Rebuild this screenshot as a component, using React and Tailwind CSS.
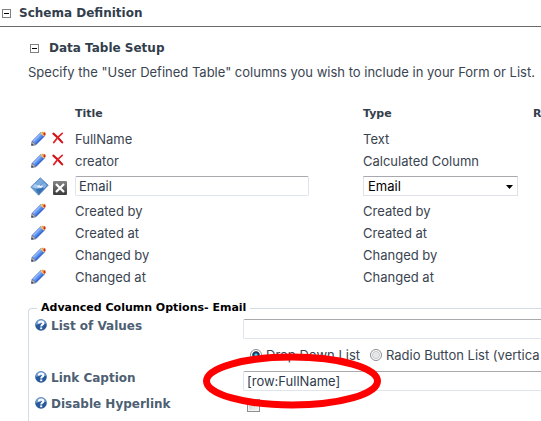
import React, { useState } from "react";

const columns = [
  { title: "FullName", type: "Text", removable: true },
  { title: "creator", type: "Calculated Column", removable: true },
  { title: "Email", type: "Email", editing: true },
  { title: "Created by", type: "Created by" },
  { title: "Created at", type: "Created at" },
  { title: "Changed by", type: "Changed by" },
  { title: "Changed at", type: "Changed at" },
];

const headingFont = "font-['DejaVu_Sans',sans-serif] font-bold";

const inputClass =
  "block h-5 border border-[#dfe5ee] border-t-[#a9a9ad] bg-white px-[3px] text-[13px] leading-4 text-[#2f3b4d] outline-none";

function ToggleButton({ open, onClick, label }) {
  return (
    <button
      type="button"
      aria-label={label}
      onClick={onClick}
      className="flex h-[9px] w-[9px] shrink-0 items-center justify-center border border-[#808080] bg-white"
    >
      <span className={open ? "h-px w-[5px] bg-black" : "h-[5px] w-[5px] bg-black"} />
    </button>
  );
}

function PencilIcon() {
  return (
    <svg width="15" height="15" viewBox="0 0 15 15" className="block">
      <path d="M0.6 14.2 L1.2 10.2 L9.8 1.6 L13.4 5.2 L4.8 13.8 Z" fill="#5a8ff0" stroke="#3a5fb4" strokeWidth="0.7" />
      <path d="M2.4 10.4 L10.4 2.4" stroke="#8fb6fb" strokeWidth="1.6" />
      <path d="M4.6 13 L12.8 4.8" stroke="#3565cf" strokeWidth="1.2" />
      <path d="M0.6 14.2 L1.4 10.4 L4.6 13.6 Z" fill="#b9b7b6" stroke="#77777c" strokeWidth="0.6" />
      <path d="M0.3 14.6 L0.9 12.4 L2.6 14.2 Z" fill="#3a3a3a" />
      <path d="M9.4 2.2 L11.2 0.5 L14.5 3.8 L12.8 5.6 Z" fill="#f3c868" />
      <path d="M12.6 1.2 L14.4 1.4 L14.6 4 L13.6 4.8 L12.4 3.4 Z" fill="#cf2318" />
      <path d="M10.4 1.4 L12 0.4 L13 1.5 L11.8 2.8 Z" fill="#efa23e" />
    </svg>
  );
}

function DeleteIcon() {
  return (
    <svg width="12" height="12" viewBox="0 0 12 12" className="block">
      <path d="M1.4 1.6 Q5.4 4.8 10.2 10.4" fill="none" stroke="#cf1018" strokeWidth="2" strokeLinecap="round" />
      <path d="M10.2 1.4 Q5.4 5 1.8 10.6" fill="none" stroke="#e0242b" strokeWidth="1.8" strokeLinecap="round" />
    </svg>
  );
}

function SaveIcon() {
  return (
    <svg width="19" height="19" viewBox="0 0 20 20" className="block">
      <defs>
        <linearGradient id="disk" x1="0" y1="0" x2="1" y2="1">
          <stop offset="0" stopColor="#8db8e6" />
          <stop offset="0.5" stopColor="#5c92cc" />
          <stop offset="1" stopColor="#2b5d9c" />
        </linearGradient>
      </defs>
      <path d="M10.8 0.8 L19.2 8.6 L9.2 19.2 L0.8 10.6 Z" fill="url(#disk)" stroke="#4f84c0" strokeWidth="0.8" strokeLinejoin="round" />
      <path d="M10.6 2 L14.6 5.6 L9.8 9 L5.6 6.8 Z" fill="#7aabdf" />
      <path d="M5.4 7 L9 9 L6.6 12.2 L2.2 10.4 Z" fill="#a9cbf0" />
      <path d="M11.4 8.6 L14.8 6 L17.8 8.8 L14.8 12 Z" fill="#86b2e2" />
      <path d="M7.6 9.8 L9.6 8.2 L11 9.4 L12.6 8.6 L13.8 10.2 L11 11.8 L9.4 11 L8 12.2 Z" fill="#e6f1fc" />
      <path d="M6.4 13 L10 12.6 L13.8 11.4 L14 13 L9.2 17.6 Z" fill="#3670b4" />
    </svg>
  );
}

function CancelIcon() {
  return (
    <svg width="14" height="14" viewBox="0 0 14 14" className="block">
      <defs>
        <linearGradient id="cancel" x1="0" y1="0" x2="0" y2="1">
          <stop offset="0" stopColor="#858585" />
          <stop offset="1" stopColor="#3b3b3b" />
        </linearGradient>
      </defs>
      <rect width="14" height="14" rx="1" fill="url(#cancel)" />
      <path d="M3 3 L11 11 M11 3 L3 11" stroke="#fff" strokeWidth="2.2" />
    </svg>
  );
}

function HelpIcon() {
  return (
    <svg width="12" height="12" viewBox="0 0 12 12" className="shrink-0">
      <circle cx="6" cy="6" r="5.8" fill="#27599b" />
      <path d="M0.8 6 A5.2 5.2 0 0 1 11.2 5 Q6 3.6 0.8 6" fill="#6f9bcd" />
      <path d="M3.7 4.5 Q3.8 2.4 6.1 2.4 Q8.4 2.5 8.4 4.3 Q8.4 5.3 7.1 5.9 Q6.3 6.3 6.2 7.5" fill="none" stroke="#fff" strokeWidth="2" />
      <rect x="5.2" y="8.4" width="2" height="1.8" fill="#fff" />
    </svg>
  );
}

function OptionRow({ label, htmlFor, children }) {
  return (
    <div className="flex h-[26px]">
      <div className="flex w-[208px] shrink-0 gap-1">
        {label && (
          <>
            <HelpIcon />
            <label htmlFor={htmlFor} className={`${headingFont} text-[12px] leading-[14px] text-[#4e5f73]`}>
              {label}
            </label>
          </>
        )}
      </div>
      {children}
    </div>
  );
}

function RadioOption({ value, current, onChange }) {
  return (
    <label className="flex items-center gap-1 whitespace-nowrap">
      <input
        type="radio"
        name="listType"
        checked={current === value}
        onChange={() => onChange(value)}
        className="h-3 w-3 shrink-0 appearance-none rounded-full border border-[#8a8d91] bg-[radial-gradient(#e8e8e8_0_35%,#c9ccd0_50%,#fff_62%)] checked:bg-[radial-gradient(#5cc4f0_0_10%,#12507c_30%,#122c44_46%,#fff_60%)]"
      />
      {value}
    </label>
  );
}

export default function App() {
  const [schemaOpen, setSchemaOpen] = useState(true);
  const [setupOpen, setSetupOpen] = useState(true);
  const [title, setTitle] = useState("Email");
  const [type, setType] = useState("Email");
  const [listOfValues, setListOfValues] = useState("");
  const [listType, setListType] = useState("Drop Down List");
  const [caption, setCaption] = useState("[row:FullName]");
  const [disabled, setDisabled] = useState(false);

  return (
    <div className="w-full overflow-hidden bg-white font-['Inter',sans-serif] text-[13px] leading-4 text-[#3a4450]">
      {/* Section header */}
      <div className="flex h-[27px] items-center gap-2 border-b border-[#6b6b6b] pl-0.5">
        <ToggleButton open={schemaOpen} onClick={() => setSchemaOpen(!schemaOpen)} label="Toggle Schema Definition" />
        <h1 className={`${headingFont} text-[12px] text-[#333e4c]`}>Schema Definition</h1>
      </div>

      {schemaOpen && (
        <div className="pt-[13px] pl-7">
          <div className="flex items-center gap-2.5 pl-0.5">
            <ToggleButton open={setupOpen} onClick={() => setSetupOpen(!setupOpen)} label="Toggle Data Table Setup" />
            <h2 className={`${headingFont} text-[12px] text-[#333e4c]`}>Data Table Setup</h2>
          </div>

          {setupOpen && (
            <>
              <p className="mt-2 whitespace-nowrap">
                Specify the "User Defined Table" columns you wish to include in your Form or List.
              </p>

              {/* Columns */}
              <table className="mt-5 w-full table-fixed border-collapse text-left">
                <colgroup>
                  <col className="w-[47px]" />
                  <col className="w-[288px]" />
                  <col className="w-[170px]" />
                  <col />
                </colgroup>
                <thead>
                  <tr className={`${headingFont} h-7 text-[11px] text-[#333e4c]`}>
                    <th></th>
                    <th>Title</th>
                    <th>Type</th>
                    <th>R</th>
                  </tr>
                </thead>
                <tbody>
                  {columns.map((col) =>
                    col.editing ? (
                      <tr key={col.title} className="h-7">
                        <td>
                          <div className="flex items-center gap-1 pl-0.5">
                            <button type="button" aria-label="Save"><SaveIcon /></button>
                            <button type="button" aria-label="Cancel" className="pt-1"><CancelIcon /></button>
                          </div>
                        </td>
                        <td>
                          <input
                            type="text"
                            aria-label="Title"
                            value={title}
                            onChange={(e) => setTitle(e.target.value)}
                            className={`${inputClass} w-[234px] rounded-xs`}
                          />
                        </td>
                        <td>
                          <div className="relative w-[155px]">
                            <select
                              aria-label="Type"
                              value={type}
                              onChange={(e) => setType(e.target.value)}
                              className="block h-5 w-full appearance-none border border-[#dfe0e8] border-t-[#a9a9ad] bg-white pl-1 text-[13px] leading-4 text-black outline-none"
                            >
                              <option>Email</option>
                              <option>Text</option>
                            </select>
                            <svg width="7" height="4" viewBox="0 0 7 4" className="pointer-events-none absolute top-[9px] right-[5px]">
                              <path d="M0 0 H7 L3.5 4 Z" fill="#000" />
                            </svg>
                          </div>
                        </td>
                        <td></td>
                      </tr>
                    ) : (
                      <tr key={col.title} className="h-[22px]">
                        <td>
                          <div className="flex items-center gap-1.5 pb-0.5 pl-[3px]">
                            <button type="button" aria-label={`Edit ${col.title}`}><PencilIcon /></button>
                            {col.removable && (
                              <button type="button" aria-label={`Delete ${col.title}`}><DeleteIcon /></button>
                            )}
                          </div>
                        </td>
                        <td>{col.title}</td>
                        <td>{col.type}</td>
                        <td></td>
                      </tr>
                    )
                  )}
                </tbody>
              </table>

              {/* Advanced options */}
              <fieldset className="mt-3 h-[130px] rounded-tl-sm border border-r-0 border-b-0 border-[#d3dce6] pl-1.5">
                <legend className={`${headingFont} ml-0.5 px-1 text-[11px] leading-4 text-black`}>
                  Advanced Column Options- Email
                </legend>
                <div className="relative pt-[3px]">
                  <OptionRow label="List of Values" htmlFor="listOfValues">
                    <input
                      id="listOfValues"
                      type="text"
                      value={listOfValues}
                      onChange={(e) => setListOfValues(e.target.value)}
                      className={`${inputClass} min-w-0 flex-1 rounded-l-xs border-r-0`}
                    />
                  </OptionRow>
                  <OptionRow>
                    <div className="flex h-5 items-center gap-2.5 pl-[7px]">
                      <RadioOption value="Drop Down List" current={listType} onChange={setListType} />
                      <RadioOption value="Radio Button List (vertica" current={listType} onChange={setListType} />
                    </div>
                  </OptionRow>
                  <OptionRow label="Link Caption" htmlFor="caption">
                    <input
                      id="caption"
                      type="text"
                      value={caption}
                      onChange={(e) => setCaption(e.target.value)}
                      className={`${inputClass} min-w-0 flex-1 rounded-l-xs border-r-0`}
                    />
                  </OptionRow>
                  <OptionRow label="Disable Hyperlink" htmlFor="disableLink">
                    <input
                      id="disableLink"
                      type="checkbox"
                      checked={disabled}
                      onChange={(e) => setDisabled(e.target.checked)}
                      className="mt-0.5 ml-1 h-[13px] w-[13px] appearance-none border border-[#8e8f8f] bg-linear-to-br from-[#c9ccd0] to-[#f6f6f6] shadow-[inset_0_0_0_1px_#f4f4f4] checked:bg-[#12507c]"
                    />
                  </OptionRow>

                  {/* Marker ring round the link caption */}
                  <svg
                    width="180"
                    height="56"
                    viewBox="0 0 180 56"
                    className="pointer-events-none absolute top-[37px] left-[167px]"
                  >
                    <ellipse cx="90" cy="28" rx="85.5" ry="24" fill="none" stroke="#fe0000" strokeWidth="7" />
                  </svg>
                </div>
              </fieldset>
            </>
          )}
        </div>
      )}
    </div>
  );
}
